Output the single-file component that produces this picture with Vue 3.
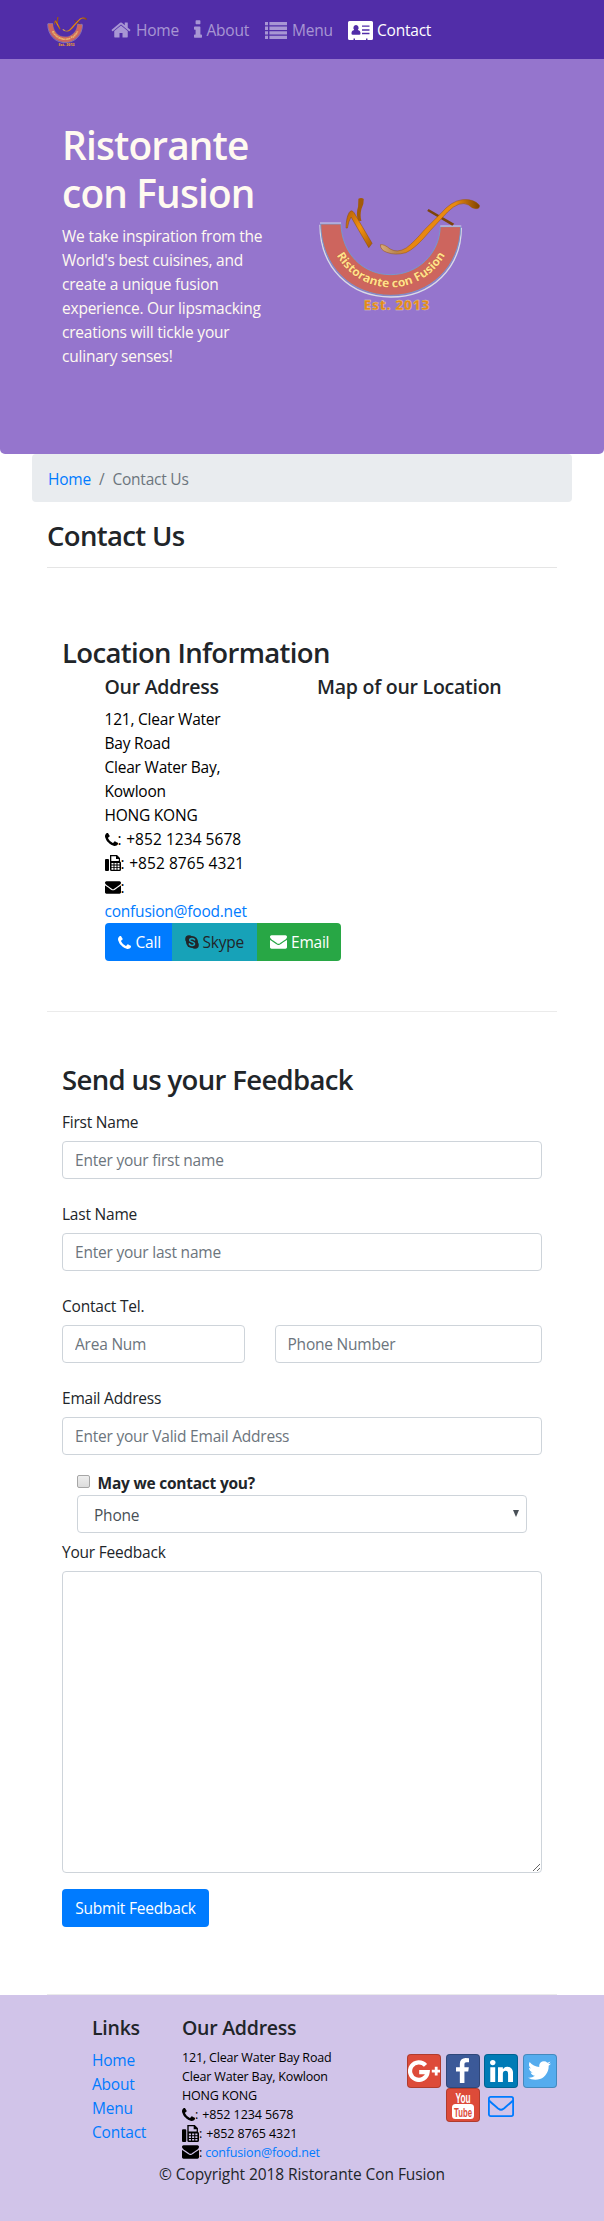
<script setup>
const navItems = [
  { label: 'Home', icon: 'home', active: false },
  { label: 'About', icon: 'info', active: false },
  { label: 'Menu', icon: 'list', active: false },
  { label: 'Contact', icon: 'card', active: true },
]
const links = ['Home', 'About', 'Menu', 'Contact']
</script>

<template>
  <div class="page">
    <svg class="defs" width="0" height="0" aria-hidden="true">
      <defs>
        <linearGradient id="metal" x1="0" y1="0" x2="1" y2="1">
          <stop offset="0" stop-color="#b45f06" />
          <stop offset="0.5" stop-color="#f39212" />
          <stop offset="1" stop-color="#a85a04" />
        </linearGradient>
        <linearGradient id="blade" gradientUnits="userSpaceOnUse" x1="240" y1="0" x2="540" y2="0">
          <stop offset="0" stop-color="#d9ab7c" />
          <stop offset="0.16" stop-color="#b9854f" />
          <stop offset="0.3" stop-color="#e8860f" />
          <stop offset="0.75" stop-color="#ea8a10" />
          <stop offset="1" stop-color="#7a3f00" />
        </linearGradient>
        <path id="bowl-text" d="M87 135A185 185 0 0 0 457 135" />
        <symbol id="logo" viewBox="51 40 500 360" preserveAspectRatio="none">
          <path d="M60 132C60 262 150 349 272 349S483 262 483 141" fill="none" stroke="#d8dde6" stroke-width="4" />
          <path d="M62 130H123C125 220 190 282 271 282S418 220 420 138H481C479 258 390 344 272 344S64 258 62 130Z" fill="#cd655e" stroke="#6c9fd4" stroke-width="2.5" />
          <path d="M60 127H123M420 136H483" stroke="#dfe5ee" stroke-width="2.5" />
          <text font-family="'Open Sans', sans-serif" font-weight="700" font-size="35" letter-spacing="0" fill="#ffe08a" stroke="#b5542f" stroke-width="1.5" paint-order="stroke">
            <textPath href="#bowl-text" startOffset="92" textLength="398" lengthAdjust="spacingAndGlyphs">Ristorante con Fusion</textPath>
          </text>
          <path d="M175 54Q184 49 191 55Q192 68 184 85Q179 105 184 121L174 120Q167 98 174 78Z" fill="#a35a08" />
          <path d="M138 142Q138 112 147 96Q154 85 162 96L216 188L206 201L153 109Q145 122 142 142Z" fill="url(#metal)" stroke="#8a4b04" stroke-width="1.5" />
          <path d="M385 85L462 129L456 135L381 91Z" fill="#7d430a" />
          <path d="M241 192Q252 190 270 205Q292 218 318 202Q342 184 372 148L421 99Q453 61 486 57Q519 54 537 73Q540 84 527 84Q514 83 505 73Q478 58 442 94L391 149Q345 205 317 216Q285 225 260 215Q240 208 241 192Z" fill="url(#blade)" stroke="#9a5505" stroke-width="1.5" />
          <text x="190" y="389" font-family="'Open Sans', sans-serif" font-weight="800" font-size="42" letter-spacing="0" textLength="198" lengthAdjust="spacing" fill="#e58a17" stroke="#d8cfc4" stroke-width="1">Est. 2013</text>
        </symbol>

        <symbol id="home" viewBox="64 128 1664 1536"><path d="M1472 992v480q0 26-19 45t-45 19h-384v-384h-256v384h-384q-26 0-45-19t-19-45v-480q0-1 .5-3t.5-3l575-474 575 474q1 2 1 6zm223-69l-62 74q-8 9-21 11h-3q-13 0-21-7l-692-577-692 577q-12 8-24 7-13-2-21-11l-62-74q-8-10-7-23.5t11-21.5l719-599q32-26 76-26t76 26l244 204v-195q0-14 9-23t23-9h192q14 0 23 9t9 23v408l219 182q10 8 11 21.5t-7 23.5z" /></symbol>
        <symbol id="info" viewBox="576 128 640 1408"><path d="M1216 1344v128q0 26-19 45t-45 19h-512q-26 0-45-19t-19-45v-128q0-26 19-45t45-19h64v-384h-64q-26 0-45-19t-19-45v-128q0-26 19-45t45-19h384q26 0 45 19t19 45v576h64q26 0 45 19t19 45zm-128-1152v192q0 26-19 45t-45 19h-256q-26 0-45-19t-19-45v-192q0-26 19-45t45-19h256q26 0 45 19t19 45z" /></symbol>
        <symbol id="list" viewBox="0 0 22 17">
          <path d="M0 0h3v3.3H0zM4.400 0H22v3.300H4.400zM0 4.600h3v3.300H0zM4.400 4.600H22v3.300H4.400zM0 9.200h3v3.300H0zM4.400 9.200H22v3.300H4.400zM0 13.700h3V17H0zM4.400 13.700H22V17H4.400z" />
        </symbol>
        <symbol id="card" viewBox="0 0 25 19">
          <path fill-rule="evenodd" d="M1.500 0h22Q25 0 25 1.500v16Q25 19 23.500 19h-4v-1.500h-1.500V19H7v-1.500H5.500V19h-4Q0 19 0 17.500v-16Q0 0 1.500 0zM8 4a2.600 2.900 0 0 0-1.800 5C4 9.200 3.500 11 3.500 12.500q0 1.300 1.200 1.300h6.600q1.200 0 1.200-1.300C12.500 11 12 9.200 9.800 9A2.600 2.900 0 0 0 8 4zM14 4.500v1.300h7.500V4.500zM14 8.200v1.500h7.500V8.200zM14 11.800v1.500h7.500v-1.500z" />
        </symbol>
        <symbol id="phone" viewBox="192 128 1408 1408"><path d="M1600 1240q0 27-10 70.500t-21 68.500q-21 50-122 106-94 51-186 51-27 0-53-3.500t-57-12.500-47-14.500-55.500-20.500-49.500-18q-98-35-175-83-127-79-264-216t-216-264q-48-77-83-175-3-9-18-49.500t-20.500-55.500-14.500-47-12.500-57-3.500-53q0-92 51-186 56-101 106-122 25-11 68.500-21t70.500-10q14 0 21 3 18 6 53 76 11 19 30 54t35 63.500 31 53.500q3 4 17.500 25t21.500 35.500 7 28.500q0 20-28.500 50t-62 55-62 53-28.500 46q0 9 5 22.500t8.500 20.500 14 24 11.500 19q76 137 174 235t235 174q2 1 19 11.500t24 14 20.500 8.500 22.500 5q18 0 46-28.500t53-62 55-62 50-28.500q14 0 28.500 7t35.500 21.500 25 17.500q25 15 53.500 31t63.500 35 54 30q70 35 76 53 3 7 3 21z" /></symbol>
        <symbol id="fax" viewBox="0 0 16 16">
          <path fill-rule="evenodd" d="M1 4h2q1 0 1 1v10q0 1-1 1H1q-1 0-1-1V5q0-1 1-1zM5 0h7l3 3v3.500q1 .4 1 1.500v6.500q0 1.500-1.500 1.500H6.500Q5 16 5 14.500zM6.300 1.200V6h7.500V4H11V1.200zM6.500 8v1.600h2V8zM9.500 8v1.600h2V8zM12.500 8v1.600h2V8zM6.500 10.600v1.600h2v-1.600zM9.500 10.600v1.600h2v-1.600zM12.500 10.600v1.600h2v-1.600zM6.500 13.100v1.600h2v-1.600zM9.500 13.100v1.600h2v-1.600zM12.500 13.100v1.600h2v-1.600z" />
        </symbol>
        <symbol id="mail" viewBox="0 256 1792 1408"><path d="M1792 710v794q0 66-47 113t-113 47h-1472q-66 0-113-47t-47-113v-794q44 49 101 87 362 246 497 345 57 42 92.500 65.500t94.500 48 110 24.500h2q51 0 110-24.500t94.500-48 92.500-65.500q170-123 498-345 57-39 100-87zm0-294q0 79-49 151t-122 123q-376 261-468 325-10 7-42.500 31t-54 38.500-52 32.500-57.500 27-50 9h-2q-23 0-50-9t-57.500-27-52-32.500-54-38.500-42.500-31q-91-64-262-182.500t-205-142.500q-62-42-117-115.500t-55-136.500q0-78 41.500-130t118.500-52h1472q65 0 112.500 47t47.500 113z" /></symbol>
        <symbol id="skype" viewBox="0 0 14 14">
          <circle cx="7" cy="7" r="6" /><circle cx="4" cy="4" r="3.800" /><circle cx="10" cy="10" r="3.800" />
          <path d="M9.600 4.900C8.700 3 4.700 3.200 4.700 5.200C4.700 7.200 9.500 6.400 9.500 8.800C9.500 10.900 5.200 11.200 4.300 8.900" fill="none" stroke="#17a2b8" stroke-width="1.600" stroke-linecap="round" />
        </symbol>
        <symbol id="facebook" viewBox="479 0 864 1664"><path d="M1343 12v264h-157q-86 0-116 36t-30 108v189h293l-39 296h-254v759h-306v-759h-255v-296h255v-218q0-186 104-288.500t277-102.500q147 0 228 12z" /></symbol>
        <symbol id="linkedin" viewBox="128 148 1536 1468"><path d="M477 625v991h-330v-991h330zm21-306q1 73-50.500 122t-135.500 49h-2q-82 0-132-49t-50-122q0-74 51.500-122.500t134.500-48.500 133 48.500 51 122.500zm1166 729v568h-329v-530q0-105-40.500-164.500t-126.500-59.500q-63 0-105.500 34.500t-63.500 85.500q-11 30-11 81v553h-329q2-399 2-647t-1-296l-1-48h329v144h-2q20-32 41-56t56.500-52 87-43.500 114.500-15.500q171 0 278 113.500t107 332.500z" /></symbol>
        <symbol id="twitter" viewBox="108 256 1576 1280"><path d="M1684 408q-67 98-162 167 1 14 1 42 0 130-38 259.500t-115.500 248.500-184.500 210.500-258 146-323 54.500q-271 0-496-145 35 4 78 4 225 0 401-138-105-2-188-64.500t-114-159.500q33 5 61 5 43 0 85-11-112-23-185.500-111.500t-73.500-205.500v-4q68 38 146 41-66-44-105-115t-39-154q0-88 44-163 121 149 294.500 238.500t371.500 99.500q-8-38-8-74 0-134 94.500-228.500t228.500-94.500q140 0 236 102 109-21 205-78-37 115-142 178 93-10 186-50z" /></symbol>
        <symbol id="google" viewBox="0 0 32 22">
          <path d="M17.500 5.300A8.800 8.800 0 1 0 19.600 12.200H11.200" fill="none" stroke="#fff" stroke-width="4.200" />
          <path d="M26.800 6.800h2.800v3h3v2.800h-3v3h-2.800v-3h-3V9.800h3z" fill="#fff" />
        </symbol>
      </defs>
    </svg>

    <nav class="navbar">
      <svg class="brand"><use href="#logo" /></svg>
      <ul class="nav">
        <li v-for="n in navItems" :key="n.label" :class="['nav-item', { active: n.active }]">
          <svg :class="['icon', 'nav-' + n.icon]"><use :href="'#' + n.icon" /></svg>
          <span>{{ n.label }}</span>
        </li>
      </ul>
    </nav>

    <header class="jumbotron">
      <div class="intro">
        <h1>Ristorante<br />con Fusion</h1>
        <p>We take inspiration from the<br />World's best cuisines, and<br />create a unique fusion<br />experience. Our lipsmacking<br />creations will tickle your<br />culinary senses!</p>
      </div>
      <svg class="hero-logo"><use href="#logo" /></svg>
    </header>

    <main class="container">
      <ol class="breadcrumb">
        <li><a>Home</a></li>
        <li class="slash">/</li>
        <li>Contact Us</li>
      </ol>
      <h3 class="title">Contact Us</h3>

      <section class="block location">
        <h3>Location Information</h3>
        <div class="columns">
          <div class="address-col">
            <h5>Our Address</h5>
            <address>
              121, Clear Water<br />Bay Road<br />Clear Water Bay,<br />Kowloon<br />HONG KONG<br />
              <svg class="icon a-phone"><use href="#phone" /></svg>: <span class="num">+852 1234 5678</span><br />
              <svg class="icon a-fax"><use href="#fax" /></svg>: <span class="num">+852 8765 4321</span><br />
              <svg class="icon a-mail"><use href="#mail" /></svg>:<br />
              <a>confusion@food.net</a>
            </address>
            <div class="btn-group">
              <a class="btn call"><svg class="icon a-phone"><use href="#phone" /></svg><span>Call</span></a>
              <a class="btn skype"><svg class="icon b-skype"><use href="#skype" /></svg><span>Skype</span></a>
              <a class="btn email"><svg class="icon b-mail"><use href="#mail" /></svg><span>Email</span></a>
            </div>
          </div>
          <h5 class="map">Map of our Location</h5>
        </div>
      </section>

      <section class="block feedback">
        <h3>Send us your Feedback</h3>
        <form @submit.prevent>
          <label>First Name</label>
          <input class="control" type="text" placeholder="Enter your first name" />
          <label>Last Name</label>
          <input class="control" type="text" placeholder="Enter your last name" />
          <label>Contact Tel.</label>
          <div class="tel">
            <input class="control" type="text" placeholder="Area Num" />
            <input class="control" type="text" placeholder="Phone Number" />
          </div>
          <label>Email Address</label>
          <input class="control" type="text" placeholder="Enter your Valid Email Address" />
          <div class="contact-ok">
            <div class="check"><span class="box"></span><strong>May we contact you?</strong></div>
            <div class="select"><span>Phone</span><svg width="6" height="7" viewBox="0 0 6 7"><path d="M0 0h6L3 7z" fill="#495057" /></svg></div>
          </div>
          <label>Your Feedback</label>
          <textarea class="control area"></textarea>
          <button class="submit" type="submit">Submit Feedback</button>
        </form>
      </section>
    </main>

    <footer class="footer">
      <div class="foot-cols">
        <div class="foot-links">
          <h5>Links</h5>
          <a v-for="l in links" :key="l">{{ l }}</a>
        </div>
        <div class="foot-address">
          <h5>Our Address</h5>
          <address>
            121, Clear Water Bay Road<br />Clear Water Bay, Kowloon<br />HONG KONG<br />
            <svg class="icon f-phone"><use href="#phone" /></svg>: <span class="num">+852 1234 5678</span><br />
            <svg class="icon f-fax"><use href="#fax" /></svg>: <span class="num">+852 8765 4321</span><br />
            <svg class="icon f-mail"><use href="#mail" /></svg>: <a>confusion@food.net</a>
          </address>
        </div>
        <div class="social">
          <a class="tile google"><svg width="32" height="22"><use href="#google" /></svg></a>
          <a class="tile fb"><svg width="13" height="25"><use href="#facebook" /></svg></a>
          <a class="tile in"><svg width="23" height="22"><use href="#linkedin" /></svg></a>
          <a class="tile tw"><svg width="23" height="19"><use href="#twitter" /></svg></a>
          <a class="tile yt">
            <svg width="34" height="34" viewBox="0 0 34 34">
              <text x="9.500" y="15" font-size="14" textLength="15" lengthAdjust="spacingAndGlyphs" fill="#fff">You</text>
              <rect x="6" y="16" width="22" height="15" rx="3.500" fill="#fff" />
              <text x="8" y="28.500" font-size="13" textLength="18" lengthAdjust="spacingAndGlyphs" fill="#dd4b39">Tube</text>
            </svg>
          </a>
          <a class="tile plain">
            <svg width="26" height="21" viewBox="0 0 26 21" fill="none" stroke="#007bff" stroke-width="1.800">
              <rect x="0.900" y="0.900" width="24.200" height="19.200" rx="1.800" />
              <path d="M1 4.500C4.500 8 8 10.500 10.500 12.800Q13 14.800 15.500 12.800C18 10.500 21.500 8 25 4.500" />
            </svg>
          </a>
        </div>
      </div>
      <p class="copyright">© Copyright 2018 Ristorante Con Fusion</p>
    </footer>
  </div>
</template>

<style>
body {
  margin: 0;
  background: #fff;
}
</style>

<style scoped>
.page {
  font-family: "Open Sans", "Noto Sans", sans-serif;
  font-size: 15.500px;
  line-height: 24px;
  letter-spacing: -0.22px;
  color: #212529;
  width: 604px;
}
.page * { box-sizing: border-box; }
.defs { display: block; position: absolute; }
h1, h3, h5, p, ul, ol { margin: 0; padding: 0; }
li { list-style: none; }
h3 { font-size: 27.500px; line-height: 33.600px; font-weight: 600; letter-spacing: -0.65px; }
h5 { font-size: 19.500px; line-height: 24px; font-weight: 600; letter-spacing: -0.250px; margin-bottom: 8px; }
a { color: #007bff; text-decoration: none; }
.icon { fill: currentColor; flex: none; }

.navbar {
  height: 59px;
  background: #512da8;
  padding-left: 47px;
  display: flex;
  align-items: center;
}
.brand { width: 41px; height: 31px; margin: 4px 23px 0 0; }
.nav { display: grid; grid-template-columns: 82.500px 71.500px 83px auto; }
.nav-item { display: flex; align-items: center; padding-top: 1px; color: rgba(255, 255, 255, 0.5); }
.nav-item.active { color: #fff; }
.nav-home { width: 20px; height: 18px; margin-right: 5px; }
.nav-info { width: 8px; height: 18px; margin: -2px 5px 0 0; }
.nav-list { width: 22px; height: 17px; margin-right: 5px; }
.nav-card { width: 25px; height: 19px; margin-right: 4px; }

.jumbotron {
  height: 395px;
  background: #9575cd;
  color: floralwhite;
  border-radius: 0 0 5px 5px;
  padding: 62px 0 0 62px;
  display: flex;
}
.intro { width: 255px; }
h1 { font-size: 38.800px; line-height: 48px; font-weight: 600; letter-spacing: -0.850px; margin-bottom: 7px; }
.hero-logo { width: 167px; height: 120px; margin-top: 72.500px; }

.container { width: 540px; margin: 0 auto; }
.breadcrumb {
  height: 48px;
  padding: 13px 16px 11px;
  display: flex;
  gap: 8px;
  background: #e9ecef;
  border-radius: 4px;
  color: #6c757d;
}
.title { margin: 17px 15px 0; padding-bottom: 14.500px; border-bottom: 1px solid #e5e5e5; }
.block { margin: 0 15px; padding: 50px 15px; border-bottom: 1px solid #ebebeb; }
.location { margin-top: 16px; padding-top: 51.500px; height: 427.500px; }
.location h3 { margin-bottom: 6px; }
.columns { display: flex; padding-left: 42.500px; }
.address-col { width: 212.500px; }
address { font-style: normal; color: #000; white-space: nowrap; height: 216px; }
.num { letter-spacing: 0.050px; margin-left: 1px; }
.a-phone { width: 13px; height: 13px; vertical-align: -1px; }
.a-fax { width: 16px; height: 16px; vertical-align: -2px; }
.a-mail { width: 16px; height: 13px; vertical-align: -1px; }
.btn-group { display: flex; width: 236px; height: 38px; border-radius: 4px; overflow: hidden; color: #fff; }
.btn { display: flex; align-items: center; padding-left: 13px; gap: 4px; color: #fff; }
.call { width: 67px; background: #007bff; gap: 5px; }
.skype { width: 85.500px; background: #17a2b8; color: #212529; }
.email { flex: 1; background: #28a745; }
.b-skype { width: 14px; height: 14px; }
.b-mail { width: 17px; height: 14px; }

.feedback { height: 983px; padding-top: 51px; }
.feedback h3 { margin-bottom: 6.500px; }
form { display: flex; flex-direction: column; }
label { display: block; height: 38px; padding: 7.500px 0 0; }
.control {
  width: 100%;
  height: 38px;
  margin: 0 0 16px;
  padding: 6px 12px;
  border: 1px solid #ced4da;
  border-radius: 4px;
  font: inherit;
  letter-spacing: inherit;
  color: #495057;
  background: #fff;
}
.control::placeholder { color: #6c757d; opacity: 1; }
.area { height: 302px; display: block; resize: vertical; }
.tel { display: grid; grid-template-columns: 182.500px 267.500px; gap: 30px; }
.contact-ok { padding: 0 15px; }
.check { height: 24px; display: flex; align-items: center; gap: 8px; letter-spacing: -0.230px; }
.box {
  width: 12.500px;
  height: 12.500px;
  margin-top: -2px;
  border: 1px solid #a6a6a6;
  border-radius: 2px;
  background: linear-gradient(#eee, #dcdcdc);
}
.select {
  height: 38px;
  padding: 2px 7px 0 16px;
  border: 1px solid #ced4da;
  border-radius: 4px;
  display: flex;
  align-items: center;
  justify-content: space-between;
  color: #495057;
}
.select svg { margin-top: -3px; }
.submit {
  width: 147px;
  height: 38px;
  padding: 0 12px;
  border: 0;
  border-radius: 4px;
  background: #007bff;
  color: #fff;
  font: inherit;
  letter-spacing: inherit;
  white-space: nowrap;
}

.footer { height: 226px; background: #d1c4e9; padding: 21px 32px 0; }
.foot-cols { display: flex; height: 146.500px; }
.foot-links { width: 90px; margin-left: 60px; display: flex; flex-direction: column; }
.foot-address { width: 225px; font-size: 12.500px; line-height: 19px; letter-spacing: -0.180px; }
.foot-address address { height: 115px; }
.foot-address .num { letter-spacing: -0.080px; }
.f-phone { width: 13px; height: 13px; vertical-align: -2px; }
.f-fax { width: 17px; height: 17px; vertical-align: -4px; }
.f-mail { width: 17px; height: 14px; vertical-align: -2px; }
.social {
  width: 150px;
  height: 68px;
  margin-top: 38px;
  display: grid;
  grid-template-columns: repeat(4, 34px);
  grid-auto-rows: 34px;
  justify-content: space-between;
}
.tile {
  display: flex;
  align-items: center;
  justify-content: center;
  border-radius: 4px;
  fill: #fff;
  overflow: hidden;
  box-shadow: inset 0 0 0 1px rgba(0, 0, 0, 0.2);
}
.google { background: #dd4b39; }
.fb { background: #3b5998; }
.in { background: #007bb6; }
.tw { background: #55acee; }
.yt { grid-column: 2; background: #dd4b39; font-family: "Liberation Sans", sans-serif; font-weight: 700; letter-spacing: 0; }
.plain { box-shadow: none; padding-top: 3px; }
.copyright { text-align: center; letter-spacing: -0.080px; }
</style>
